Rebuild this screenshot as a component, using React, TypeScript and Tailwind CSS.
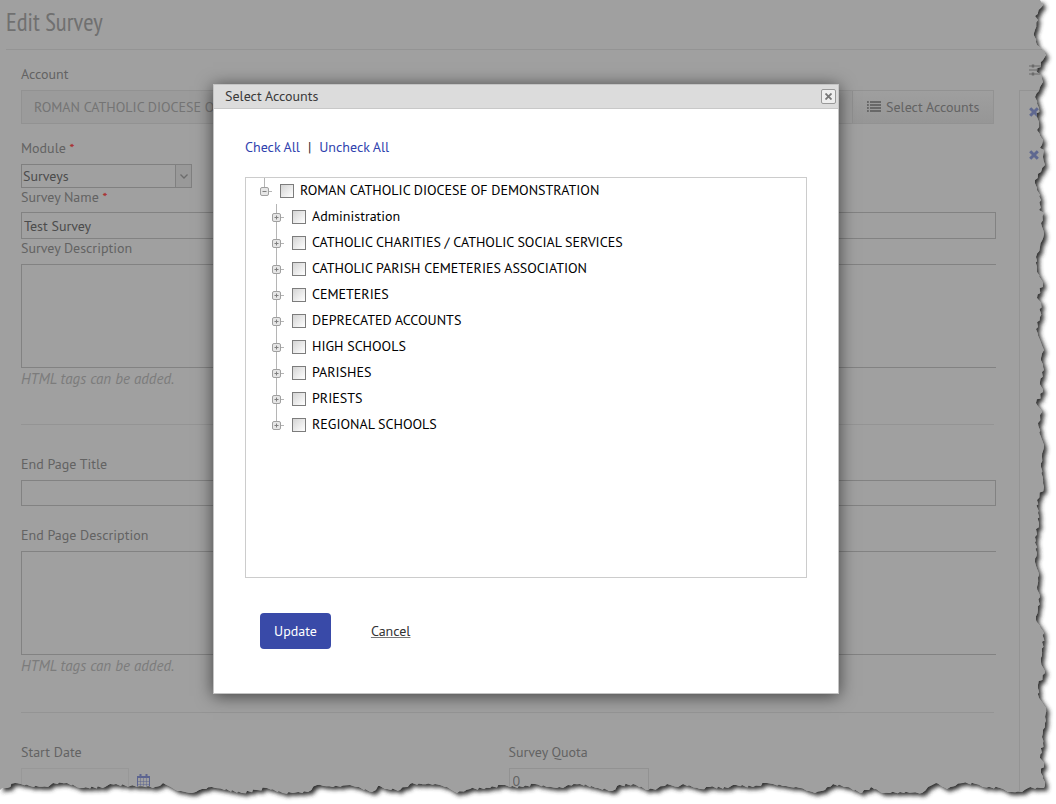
import React from "react";

type Point = [number, number];

const rightEdge: Point[] = [
  [1040, 0], [1043, 5], [1035, 16], [1038, 20], [1034, 33], [1037, 45], [1043, 50], [1046, 55], [1043, 60], [1037, 72],
  [1041, 75], [1043, 82], [1040, 87], [1035, 97], [1039, 108], [1037, 117], [1039, 122], [1037, 130], [1043, 140],
  [1040, 148], [1044, 150], [1043, 157], [1045, 165], [1041, 172], [1035, 180], [1037, 188], [1041, 200], [1039, 210],
  [1044, 213], [1041, 223], [1044, 234], [1040, 247], [1036, 257], [1037, 272], [1043, 283], [1037, 298], [1041, 303],
  [1040, 317], [1036, 329], [1040, 340], [1044, 350], [1041, 358], [1044, 370], [1040, 382], [1043, 392], [1036, 403],
  [1042, 412], [1038, 423], [1041, 437], [1044, 445], [1042, 457], [1041, 467], [1044, 487], [1037, 500], [1038, 513],
  [1039, 523], [1035, 537], [1037, 553], [1035, 562], [1039, 575], [1037, 587], [1040, 597], [1036, 620], [1044, 633],
  [1041, 662], [1045, 673], [1038, 685], [1039, 698], [1046, 708], [1045, 723], [1042, 737], [1043, 743], [1040, 758],
  [1044, 763], [1041, 773], [1045, 782], [1044, 788],
];

const bottomEdge: Point[] = [
  [1028, 788], [1022, 792], [1008, 792], [1000, 788], [983, 787], [976, 784], [963, 783], [955, 786], [947, 789],
  [936, 783], [928, 787], [922, 793], [900, 792], [883, 793], [871, 787], [862, 793], [847, 787], [833, 784], [825, 790],
  [815, 793], [800, 788], [783, 786], [767, 783], [753, 787], [733, 785], [728, 788], [710, 787], [700, 789], [683, 784],
  [678, 787], [667, 784], [658, 788], [648, 790], [633, 784], [617, 786], [612, 791], [598, 788], [580, 784], [568, 785],
  [563, 788], [547, 787], [535, 784], [523, 787], [510, 787], [502, 785], [490, 788], [470, 789], [457, 793], [447, 787],
  [435, 784], [410, 784], [400, 790], [387, 789], [378, 786], [372, 792], [357, 787], [350, 785], [333, 787], [317, 785],
  [308, 792], [283, 793], [267, 788], [257, 790], [242, 793], [212, 787], [202, 789], [192, 793], [178, 791], [163, 783],
  [155, 787], [130, 786], [110, 784], [105, 787], [80, 788], [67, 783], [53, 783], [48, 787], [30, 786], [15, 783],
  [7, 788], [0, 790],
];

function roughen(points: Point[]): Point[] {
  const out: Point[] = [];
  points.forEach((p, i) => {
    out.push(p);
    const next = points[i + 1];
    if (!next) return;
    const steps = Math.floor(Math.hypot(next[0] - p[0], next[1] - p[1]) / 3);
    for (let s = 1; s < steps; s++) {
      const t = s / steps;
      const wobble = Math.sin(i * 12.9 + s * 78.2) * 1.1;
      out.push([p[0] + (next[0] - p[0]) * t + wobble, p[1] + (next[1] - p[1]) * t + wobble]);
    }
  });
  return out;
}

const tornLine = roughen([...rightEdge, ...bottomEdge])
  .map(([x, y]) => `${x.toFixed(1)} ${y.toFixed(1)}`)
  .join("L");

function TornEdge() {
  return (
    <svg
      aria-hidden="true"
      viewBox="0 0 1056 804"
      preserveAspectRatio="none"
      className="pointer-events-none absolute inset-0 z-20 h-full w-full"
    >
      <defs>
        <clipPath id="outside">
          <path d={`M${tornLine}L-1 790V805H1057V-1H1040Z`} />
        </clipPath>
        <filter id="soft" x="-5%" y="-5%" width="110%" height="110%">
          <feGaussianBlur stdDeviation="2" />
        </filter>
      </defs>
      <g clipPath="url(#outside)">
        <rect width="1056" height="804" fill="#fff" />
        <path d={`M${tornLine}L9 700L9 6Z`} transform="translate(3 3)" fill="#333" filter="url(#soft)" />
      </g>
    </svg>
  );
}

function ListIcon() {
  return (
    <svg aria-hidden="true" viewBox="0 0 14 12" className="h-3 w-3.5 shrink-0" fill="#5c5c5c">
      {[0, 3, 6, 9].map((y) => (
        <g key={y}>
          <rect x="0" y={y + 0.2} width="1.8" height="1.6" />
          <rect x="3" y={y + 0.2} width="11" height="1.6" />
        </g>
      ))}
    </svg>
  );
}

function SlidersIcon() {
  return (
    <svg aria-hidden="true" viewBox="0 0 14 12" className="h-3 w-3.5" stroke="#6a6a6a">
      <path d="M0 2H14M0 6H14M0 10H14" strokeWidth="1" />
      <path d="M4 .5V3.5M9 4.5V7.5M4 8.5V11.5" strokeWidth="2.4" />
    </svg>
  );
}

function CrossIcon() {
  return (
    <svg aria-hidden="true" viewBox="0 0 10 10" className="size-2.5">
      <path d="M1.2 1.2L8.8 8.8M8.8 1.2L1.2 8.8" stroke="#5f6890" strokeWidth="3" />
    </svg>
  );
}

function CalendarIcon() {
  return (
    <svg aria-hidden="true" viewBox="0 0 13 14" className="h-3.5 w-[13px]" fill="none" stroke="#5d6590">
      <path d="M.5 3V13.5H12.5V3Z" />
      <path d="M0 3H13" strokeWidth="2" />
      <path d="M3.5 0V4M9.5 0V4" strokeWidth="2" />
      <path d="M3.5 4V14M6.5 4V14M9.5 4V14M0 7.5H13M0 10.5H13" strokeWidth=".5" />
    </svg>
  );
}

function Toggle({ open, last, label }: { open?: boolean; last?: boolean; label: string }) {
  return (
    <button type="button" aria-label={`${open ? "Collapse" : "Expand"} ${label}`} className="flex h-[26px] w-3 shrink-0">
      <svg aria-hidden="true" viewBox="0 0 12 26" className="h-[26px] w-3" fill="none">
        <path d={open || last ? "M4.5 0V10" : "M4.5 0V26"} stroke="#b5b5b5" />
        <path d="M9 13.5H12" stroke="#b5b5b5" />
        <rect x=".5" y="9.5" width="8" height="8" rx="1.5" fill="#e6e6e6" stroke="#a0a0a0" />
        <path d={open ? "M2.5 13.5H6.5" : "M2.5 13.5H6.5M4.5 11.5V15.5"} stroke="#808080" />
      </svg>
    </button>
  );
}

function TreeRow({ label, open, last }: { label: string; open?: boolean; last?: boolean }) {
  return (
    <div className="flex h-[26px] items-center">
      <Toggle open={open} last={last} label={label} />
      <label className="flex items-center gap-1.5 pl-2 whitespace-nowrap text-black">
        <input
          type="checkbox"
          className="size-[14px] shrink-0 appearance-none border border-[#7c7c7c] bg-linear-to-br from-[#d4d4d4] to-white checked:from-[#394aa8] checked:to-[#394aa8]"
        />
        <span className="pb-0.5">{label}</span>
      </label>
    </div>
  );
}

const children = [
  "Administration",
  "CATHOLIC CHARITIES / CATHOLIC SOCIAL SERVICES",
  "CATHOLIC PARISH CEMETERIES ASSOCIATION",
  "CEMETERIES",
  "DEPRECATED ACCOUNTS",
  "HIGH SCHOOLS",
  "PARISHES",
  "PRIESTS",
  "REGIONAL SCHOOLS",
];

function AccountsDialog() {
  return (
    <div
      role="dialog"
      aria-labelledby="dialog-title"
      className="w-[626px] border border-[#c4c4c4] bg-white shadow-[0_2px_16px_rgba(0,0,0,0.6)]"
    >
      <header className="flex h-6 items-center justify-between border-b border-[#c8c8c8] bg-[#dcdcdc] pr-0.5 pl-[11px]">
        <h2 id="dialog-title" className="pb-0.5 text-[#3a3a3a]">Select Accounts</h2>
        <button
          type="button"
          aria-label="Close"
          className="flex size-[15px] items-center justify-center rounded-xs border border-[#999] bg-[#eee]"
        >
          <svg aria-hidden="true" viewBox="0 0 7 7" className="size-[7px]">
            <path d="M.5 .5L6.5 6.5M6.5 .5L.5 6.5" stroke="#777" strokeWidth="1.8" />
          </svg>
        </button>
      </header>
      <div className="px-[31px] pt-7 pb-11">
        <div className="flex gap-2 text-[#222]">
          <a href="#check" className="text-[#2f42ae]">Check All</a>
          <span>|</span>
          <a href="#uncheck" className="text-[#2f42ae]">Uncheck All</a>
        </div>
        <div className="mt-5 h-[401px] border border-[#ccc] pl-3.5">
          <TreeRow label="ROMAN CATHOLIC DIOCESE OF DEMONSTRATION" open />
          <div className="pl-3">
            {children.map((name, i) => (
              <TreeRow key={name} label={name} last={i === children.length - 1} />
            ))}
          </div>
        </div>
        <div className="mt-[35px] flex items-center gap-10 pl-[15px]">
          <button type="button" className="h-9 rounded-sm bg-[#394aa8] px-3.5 text-white">Update</button>
          <a href="#cancel" className="text-[#333] underline decoration-[#777]">Cancel</a>
        </div>
      </div>
    </div>
  );
}

const field = "block w-full border border-[#828282] bg-transparent px-0.5 text-[#4c4c4c] outline-none";
const caption = "block h-5 leading-[18px]";
const hint = "mt-px text-[15px] text-[#7c7c7c] italic";

export default function App() {
  return (
    <div className="relative min-h-screen overflow-hidden bg-[#a0a0a0] font-['PT_Sans','Open_Sans',sans-serif] text-[14px] leading-5 text-[#636363]">
      <header className="ml-1.5 border-b border-[#949494]">
        <h1 className="flex h-[49px] items-center pb-1.5 font-['PT_Sans_Narrow','Liberation_Sans_Narrow','Open_Sans',sans-serif] text-[25px] text-[#707070]">
          Edit Survey
        </h1>
      </header>
      <div className="flex">
        <form className="min-w-0 flex-1 pt-[15px] pr-[23px] pl-[21px]">
          <label htmlFor="account" className={caption}>Account</label>
          <div className="mt-[5px] mr-0.5 flex h-[34px] border border-[#929292] bg-[#9b9b9b]">
            <input
              id="account"
              readOnly
              value="ROMAN CATHOLIC DIOCESE OF DEMONSTRATION"
              className="min-w-0 flex-1 bg-transparent px-3 text-[#747474] outline-none"
            />
            <button
              type="button"
              className="flex w-[141px] items-center gap-[5px] border-l border-[#909090] bg-linear-to-b from-[#9f9f9f] to-[#969696] pl-3.5 whitespace-nowrap"
            >
              <ListIcon />
              Select Accounts
            </button>
          </div>
          <label htmlFor="module" className={`${caption} mt-[15px]`}>
            Module <span className="text-[#a33]">*</span>
          </label>
          <div className="mt-[5px] grid h-6 w-[171px]">
            <select
              id="module"
              className="col-start-1 row-start-1 appearance-none border border-[#808080] bg-transparent pl-px text-[#4c4c4c] outline-none"
            >
              <option>Surveys</option>
            </select>
            <span className="pointer-events-none col-start-1 row-start-1 flex w-[17px] items-center justify-center justify-self-end border border-[#808080] bg-[#999]">
              <svg aria-hidden="true" viewBox="0 0 8 5" className="h-[5px] w-2" fill="none">
                <path d="M.5 .5L4 4L7.5 .5" stroke="#6c6c6c" strokeWidth="1.3" />
              </svg>
            </span>
          </div>
          <label htmlFor="name" className={caption}>
            Survey Name <span className="text-[#a33]">*</span>
          </label>
          <input id="name" defaultValue="Test Survey" className={`${field} mt-1 h-[27px]`} />
          <label htmlFor="description" className={caption}>Survey Description</label>
          <textarea id="description" className={`${field} mt-[5px] h-[104px] resize-none border-r-0`} />
          <p className={hint}>HTML tags can be added.</p>
          <hr className="mt-[35px] mr-0.5 border-[#949494]" />
          <label htmlFor="end-title" className={`${caption} mt-[30px]`}>End Page Title</label>
          <input id="end-title" className={`${field} mt-[5px] h-[26px]`} />
          <label htmlFor="end-description" className={`${caption} mt-5`}>End Page Description</label>
          <textarea id="end-description" className={`${field} mt-[5px] h-[104px] resize-none border-r-0`} />
          <p className={hint}>HTML tags can be added.</p>
          <hr className="mt-[36px] mr-0.5 border-[#949494]" />
          <div className="mt-[30px] grid grid-cols-2 pb-2">
            <div>
              <label htmlFor="start" className={caption}>Start Date</label>
              <div className="mt-[5px] flex items-center gap-2">
                <input id="start" className="h-[26px] w-[108px] border border-[#989898] bg-transparent outline-none" />
                <CalendarIcon />
              </div>
            </div>
            <div>
              <label htmlFor="quota" className={caption}>Survey Quota</label>
              <input
                id="quota"
                defaultValue="0"
                className="mt-[5px] block h-[26px] w-[140px] border border-[#929292] bg-transparent px-[3px] outline-none"
              />
            </div>
          </div>
        </form>
        <aside className="flex w-[37px] shrink-0 flex-col pt-3.5">
          <div className="pl-2.5"><SlidersIcon /></div>
          <div className="mt-3.5 flex flex-1 flex-col gap-[33px] border-t border-l border-[#949494] pt-4 pl-[9px]">
            <CrossIcon />
            <CrossIcon />
          </div>
        </aside>
      </div>
      <div className="absolute inset-x-0 top-[84px] z-10 flex justify-center pr-1">
        <AccountsDialog />
      </div>
      <TornEdge />
    </div>
  );
}
